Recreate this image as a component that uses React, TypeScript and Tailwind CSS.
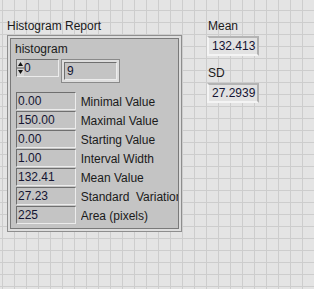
import React from "react";

const rows: [string, string][] = [
  ["0.00", "Minimal Value"],
  ["150.00", "Maximal Value"],
  ["0.00", "Starting Value"],
  ["1.00", "Interval Width"],
  ["132.41", "Mean Value"],
  ["27.23", "Standard  Variation"],
  ["225", "Area (pixels)"],
];

function Spinner() {
  return (
    <svg width="7" height="16" viewBox="0 0 7 16" className="block">
      <rect x="0" y="0" width="7" height="16" fill="#d4d4d4" />
      <line x1="0" y1="8" x2="7" y2="8" stroke="#555" strokeWidth="1" />
      <path d="M3.5 2 L6 6 L1 6 Z" fill="#111" />
      <path d="M3.5 14 L6 10 L1 10 Z" fill="#111" />
    </svg>
  );
}

function NumBox({ value }: { value: string }) {
  return (
    <div className="w-[60px] h-[18px] border border-t-[#6f6f6f] border-l-[#6f6f6f] border-r-[#ececec] border-b-[#ececec] bg-[#c4c4c4] pl-[1px] leading-[17px] text-[#141432]">
      {value}
    </div>
  );
}

function GlobalBox({ value }: { value: string }) {
  return (
    <div className="w-[52px] h-[20px] border-2 border-t-[#b4b4b4] border-l-[#f4f4f4] border-r-[#b0b0b0] border-b-[#f4f4f4] bg-[#e2e2e2] pl-[3px] leading-[17px] text-[#141432]">
      {value}
    </div>
  );
}

export default function App() {
  return (
    <div
      className="w-[314px] h-[289px] flex bg-[#e4e4e4] bg-[linear-gradient(to_right,#cdcdcd_1px,transparent_1px),linear-gradient(to_bottom,#cdcdcd_1px,transparent_1px)] bg-[size:12px_12px] bg-[position:2px_10px] text-[12px] text-[#1a1a1a] overflow-hidden"
      style={{ fontFamily: '"Liberation Sans", Arial, sans-serif' }}
    >
      {/* histogram report cluster */}
      <div className="pl-[7px] pt-[19px] w-[207px] shrink-0 flex flex-col">
        <div className="leading-[14px] h-[14px]">Histogram Report</div>
        <div className="mt-[2px] w-[175px] h-[197px] border border-[#8e8e8e] bg-[#dedede] p-[2px]">
          <div className="h-full border border-[#7a7a7a] bg-[#c4c4c4] pl-[4px] pt-[3px] overflow-hidden">
            <div className="leading-[14px] h-[14px]">histogram</div>
            <div className="mt-[3px] ml-[1px] flex items-start gap-[2px]">
              <div className="w-[43px] h-[18px] border border-t-[#6f6f6f] border-l-[#6f6f6f] border-r-[#ececec] border-b-[#ececec] bg-[#c4c4c4] flex items-center">
                <Spinner />
                <span className="leading-[16px] text-[#141432]">0</span>
              </div>
              <div className="w-[59px] h-[24px] border border-[#8a8a8a] bg-[#dedede] p-[2px]">
                <div className="h-full border border-t-[#6f6f6f] border-l-[#6f6f6f] border-r-[#ececec] border-b-[#ececec] bg-[#c4c4c4] pl-[2px] leading-[17px] text-[#141432]">
                  9
                </div>
              </div>
            </div>
            <div className="mt-[9px] ml-[1px] flex flex-col gap-[1px]">
              {rows.map(([v, label]) => (
                <div key={label} className="flex h-[18px]">
                  <NumBox value={v} />
                  <div className="ml-[5px] pt-[2px] leading-[16px] whitespace-pre overflow-hidden w-[98px]">
                    {label}
                  </div>
                </div>
              ))}
            </div>
          </div>
        </div>
      </div>

      {/* global indicators */}
      <div className="pt-[19px] flex flex-col">
        <div className="pl-[1px] leading-[14px] h-[14px]">Mean</div>
        <div className="mt-[3px]">
          <GlobalBox value="132.413" />
        </div>
        <div className="mt-[10px] pl-[1px] leading-[14px] h-[14px]">SD</div>
        <div className="mt-[3px]">
          <GlobalBox value="27.2939" />
        </div>
      </div>
    </div>
  );
}
